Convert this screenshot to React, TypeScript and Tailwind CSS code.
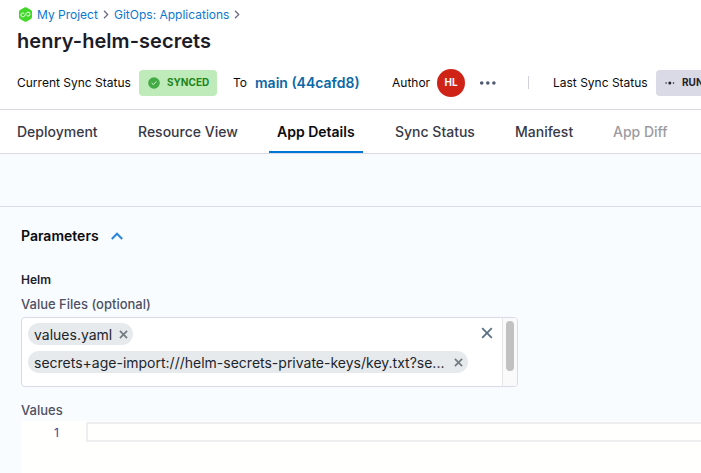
import React from "react";

function Cross({ size, color, width }: { size: number; color: string; width: number }) {
  return (
    <svg width={size} height={size} viewBox="0 0 10 10" fill="none" stroke={color} strokeWidth={width} className="shrink-0">
      <path d="M1 1L9 9M9 1L1 9" />
    </svg>
  );
}

function Crumb() {
  return (
    <svg width="6" height="9" viewBox="0 0 6 9" fill="none" stroke="#6b6d85" strokeWidth="1.3" className="shrink-0">
      <path d="M1 0.8L4.7 4.5L1 8.2" />
    </svg>
  );
}

function Header() {
  return (
    <header className="h-[110px] border-b border-[#d9dae6] bg-white">
      <nav className="flex h-7 items-center pl-[18px] text-[12px] text-[#0b78d0]">
        <svg width="15" height="15" viewBox="0 0 15 15" className="shrink-0">
          <path d="M6.4 0.6Q7.5 0 8.6 0.6L13 3.1Q14 3.7 14 4.9V10.1Q14 11.3 13 11.9L8.6 14.4Q7.5 15 6.4 14.4L2 11.9Q1 11.3 1 10.1V4.9Q1 3.7 2 3.1Z" fill="#42d829" />
          <path d="M7.5 7.7C6.6 9.4 5.7 9.8 4.8 9.8A1.9 1.9 0 0 1 4.8 6C5.4 6 6 6.3 6.3 6.8M7.5 7.7C8.2 5.9 9 5.2 10.1 5.2A1.9 1.9 0 0 1 10.1 9C9.5 9 9 8.7 8.6 8.3" fill="none" stroke="#fff" strokeWidth="1" />
        </svg>
        <span className="ml-1 w-[61px] whitespace-nowrap pt-px">My Project</span>
        <span className="ml-[5px] flex w-[11px]"><Crumb /></span>
        <span className="w-[116px] whitespace-nowrap pt-px">GitOps: Applications</span>
        <span className="ml-[4px] flex"><Crumb /></span>
      </nav>
      <h1 className="flex h-[26px] items-center whitespace-nowrap pl-[17px] text-[20px] font-semibold tracking-[0.05px] text-[#1c1c28]">henry-helm-secrets</h1>
      <div className="flex h-[57px] items-center whitespace-nowrap pl-[17px] text-[12px] text-[#0b0b0d]">
        <span className="w-[122px] shrink-0 pt-px">Current Sync Status</span>
        <span className="flex h-[26px] w-[78px] shrink-0 items-center rounded-[4px] bg-[#bfeab9] pl-[9px] text-[10px] font-bold text-[#1b841d]">
          <svg width="12" height="12" viewBox="0 0 12 12" className="mr-[7px]">
            <circle cx="6" cy="6" r="5.8" fill="#42ab45" />
            <path d="M3.6 6L5.3 7.6L8.5 4.5" fill="none" stroke="#d8f3d6" strokeWidth="1" />
          </svg>
          SYNCED
        </span>
        <span className="ml-4 w-[22px] shrink-0 pt-px">To</span>
        <span className="w-[137px] shrink-0 text-[14px] font-semibold text-[#0b68a6]">main (44cafd8)</span>
        <span className="w-[45px] shrink-0 pt-px">Author</span>
        <span className="flex size-7 shrink-0 items-center justify-center rounded-full bg-[#cf2318] pb-px text-[10px] font-bold text-white">HL</span>
        <svg width="18" height="4" viewBox="0 0 18 4" className="ml-[14px] shrink-0" fill="#4f5b73">
          <circle cx="2.7" cy="2" r="1.8" />
          <circle cx="8.8" cy="2" r="1.8" />
          <circle cx="14.9" cy="2" r="1.8" />
        </svg>
        <span className="ml-[31px] h-[13px] w-px shrink-0 bg-[#d0d0e0]" />
        <span className="ml-6 w-[103px] shrink-0 pt-px">Last Sync Status</span>
        <span className="flex h-[26px] w-[90px] shrink-0 items-center rounded-[4px] bg-[#d9dae5] pl-[9px] text-[10px] font-bold text-[#22222a]">
          <svg width="10" height="4" viewBox="0 0 10 4" className="mr-[7px]" fill="#22222a">
            <circle cx="1.1" cy="2" r="0.8" />
            <circle cx="4.8" cy="2" r="1.5" />
            <circle cx="8.5" cy="2" r="0.8" />
          </svg>
          RUNNING
        </span>
      </div>
    </header>
  );
}

function Tabs() {
  return (
    <nav className="flex h-11 whitespace-nowrap border-b border-[#d9dae6] bg-white pl-[17px] text-[14px] font-medium text-[#383946]">
      <span className="flex w-[121px] items-center">Deployment</span>
      <span className="flex w-[131px] items-center">Resource View</span>
      <span className="flex w-[94px] items-center border-b-2 border-[#0278d5] pt-[2px] pl-2 font-semibold text-[#0b0b0d]">App Details</span>
      <span className="ml-8 flex w-[120px] items-center">Sync Status</span>
      <span className="flex w-[98px] items-center">Manifest</span>
      <span className="flex items-center text-[#9b9ba1]">App Diff</span>
    </nav>
  );
}

function Tag({ text, className }: { text: string; className: string }) {
  return (
    <span className={"flex h-[22px] items-center justify-between rounded-full bg-[#e6eaed] pr-[5px] pl-[6px] text-[14px] text-[#1c252c] " + className}>
      {text}
      <Cross size={9} color="#747c83" width={2} />
    </span>
  );
}

export default function App() {
  return (
    <div className="h-[473px] w-[701px] overflow-hidden bg-[#f8fcff] font-['Inter',sans-serif]">
      <Header />
      <Tabs />
      <div className="h-[53px] border-b border-[#d6dce8]" />
      <main className="pl-[21px]">
        <div className="flex h-[57px] items-center text-[14px] font-semibold text-[#0b0b0d]">
          <span className="w-[90px] pb-px">Parameters</span>
          <svg width="12" height="8" viewBox="0 0 12 8" fill="none" stroke="#2a86dc" strokeWidth="2">
            <path d="M0.8 7L6 1.7L11.2 7" />
          </svg>
        </div>
        <h2 className="mt-[6px] flex h-5 items-center text-[12px] font-semibold text-[#22222a]">Helm</h2>
        <label className="mt-[5px] flex h-5 items-center text-[13px] font-medium text-[#4f5162]">Value Files (optional)</label>
        <div className="mt-[2px] flex h-[70px] w-[497px] overflow-hidden rounded-[4px] border border-[#d9dae5] bg-white">
          <div className="flex flex-1 flex-col gap-[6px] pt-[5px] pl-[6px] whitespace-nowrap">
            <Tag text="values.yaml" className="w-[105px]" />
            <Tag text="secrets+age-import:///helm-secrets-private-keys/key.txt?se..." className="w-[440px]" />
          </div>
          <div className="w-[21px] -ml-[21px] pt-[9px]"><Cross size={12} color="#5b7083" width={1.5} /></div>
          <div className="w-[15px] border-l border-[#e6e6e8] bg-[#fafafa] pt-[3px] pl-[3px]">
            <div className="h-[50px] w-2 rounded-full bg-[#c1c1c1]" />
          </div>
        </div>
        <label className="mt-[14px] flex h-5 items-center text-[13px] font-medium text-[#4f5162]">Values</label>
        <div className="flex h-[60px] bg-[#fffffe]">
          <span className="flex h-[24px] w-[38px] items-center justify-end text-[12px] text-[#32499b]">1</span>
          <div className="mt-px ml-[27px] h-5 flex-1 border-2 border-r-0 border-[#eeeef0]" />
        </div>
      </main>
    </div>
  );
}
